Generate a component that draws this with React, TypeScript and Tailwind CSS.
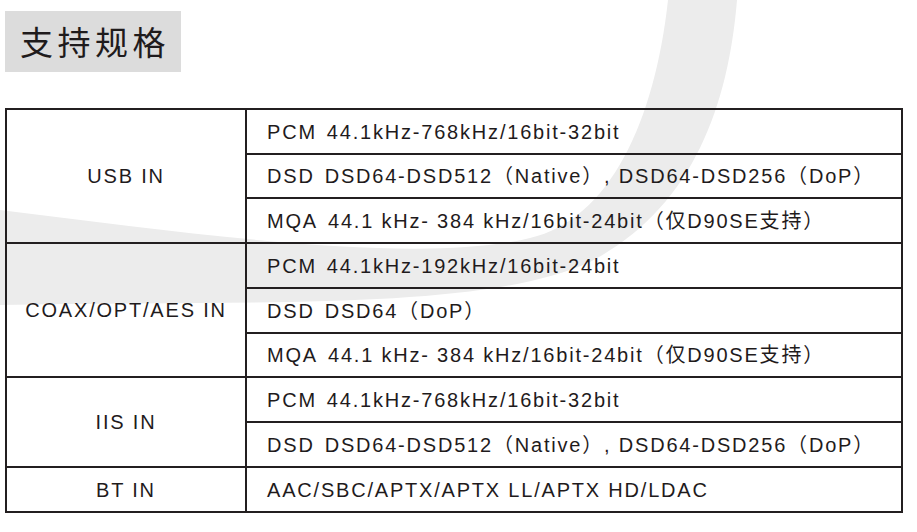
const sections = [
  {
    label: "USB IN",
    rows: [
      { h: "h-[43px]", tag: "PCM", text: "44.1kHz-768kHz/16bit-32bit" },
      { h: "h-[44px]", tag: "DSD", text: "DSD64-DSD512（Native）, DSD64-DSD256（DoP）" },
      { h: "h-[45px]", tag: "MQA", text: "44.1 kHz- 384 kHz/16bit-24bit（仅D90SE支持）" },
    ],
  },
  {
    label: "COAX/OPT/AES IN",
    rows: [
      { h: "h-[43px]", tag: "PCM", text: "44.1kHz-192kHz/16bit-24bit" },
      { h: "h-[45px]", tag: "DSD", text: "DSD64（DoP）" },
      { h: "h-[44px]", tag: "MQA", text: "44.1 kHz- 384 kHz/16bit-24bit（仅D90SE支持）" },
    ],
  },
  {
    label: "IIS IN",
    rows: [
      { h: "h-[43px]", tag: "PCM", text: "44.1kHz-768kHz/16bit-32bit" },
      { h: "h-[45px]", tag: "DSD", text: "DSD64-DSD512（Native）, DSD64-DSD256（DoP）" },
    ],
  },
  {
    label: "BT IN",
    rows: [{ h: "h-[43px]", tag: "", text: "AAC/SBC/APTX/APTX LL/APTX HD/LDAC" }],
  },
];

const Swoosh = () => (
  <svg className="absolute inset-0 h-full w-full" viewBox="0 0 917 532" aria-hidden="true">
    <path
      d="M737 0 C728 110 690 210 590 262 C480 312 250 300 0 305 L0 210 C200 235 420 265 530 238 C610 220 655 120 668 0 Z"
      fill="#ececec"
    />
  </svg>
);

export default function App() {
  return (
    <div className="relative h-[532px] w-[917px] overflow-hidden bg-white text-[#1f1b1c] font-['Liberation_Sans','Noto_Sans_CJK_SC',sans-serif]">
      <Swoosh />
      <div className="relative flex flex-col pl-[5px] pt-[11px]">
        <div className="flex h-[61px] w-[176px] items-center bg-[#dcdcdc] pl-[15px]">
          <h2 className="font-['Noto_Sans_CJK_SC',sans-serif] text-[33px] leading-none tracking-[4.5px]">支持规格</h2>
        </div>

        <div className="mt-[36px] flex w-[898px] flex-col border-2 border-[#231f20] text-[20px] tracking-[1.8px]">
          {sections.map((section, i) => (
            <div key={section.label} className={`flex ${i > 0 ? "border-t-2 border-[#231f20]" : ""}`}>
              <div className="flex w-[238px] shrink-0 items-center justify-center">{section.label}</div>
              <div className="flex flex-1 flex-col border-l-2 border-[#231f20]">
                {section.rows.map((row, j) => (
                  <div
                    key={j}
                    className={`flex items-center pl-[20px] ${row.h} ${j > 0 ? "border-t-2 border-[#231f20]" : ""}`}
                  >
                    {row.tag && <span className="mr-[10px]">{row.tag}</span>}
                    <span>{row.text}</span>
                  </div>
                ))}
              </div>
            </div>
          ))}
        </div>
      </div>
    </div>
  );
}
